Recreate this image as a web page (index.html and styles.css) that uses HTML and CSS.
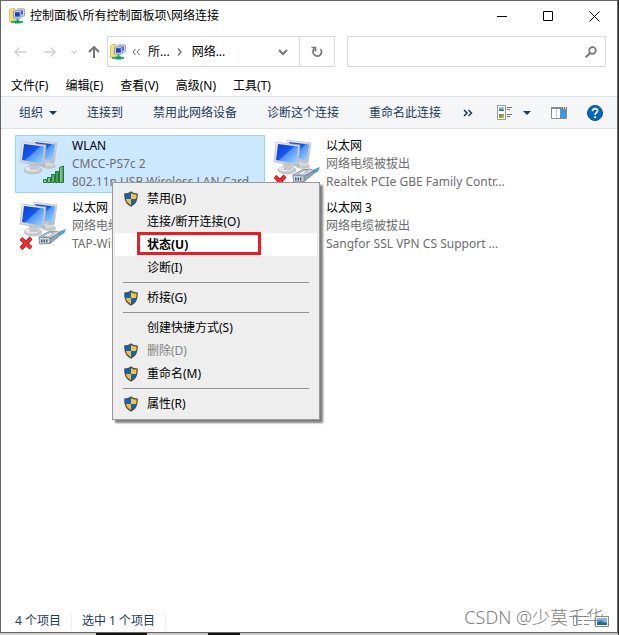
FILE: index.html
```html
<!DOCTYPE html>
<html lang="zh-CN">
<head>
<meta charset="utf-8">
<title>网络连接</title>
<link rel="stylesheet" href="styles.css">
</head>
<body>
<svg class="defs" aria-hidden="true">
  <defs>
    <linearGradient id="screen" x1="0" y1="0" x2="1" y2="1">
      <stop offset="0" stop-color="#0c3fd0"/><stop offset=".45" stop-color="#1458ea"/><stop offset=".5" stop-color="#4f95fa"/><stop offset="1" stop-color="#a9daff"/>
    </linearGradient>
    <linearGradient id="shell" x1="0" y1="0" x2="1" y2="1">
      <stop offset="0" stop-color="#f4f5f6"/><stop offset="1" stop-color="#b4b8bc"/>
    </linearGradient>
    <linearGradient id="bar" x1="0" y1="0" x2="1" y2="0">
      <stop offset="0" stop-color="#a6d9aa"/><stop offset="1" stop-color="#3c9653"/>
    </linearGradient>
    <symbol id="monitors" viewBox="0 0 40 36">
      <ellipse cx="30" cy="27" rx="7" ry="3" fill="#c3c7ca"/>
      <path d="M26 21l6-1 2 7h-7z" fill="#d6d9db"/>
      <path d="M14 1l24 3-3 20-14-2z" fill="url(#shell)" stroke="#b5b9bd" stroke-width=".6"/>
      <path d="M16 3l20 2.500-2.500 16-11-2z" fill="url(#screen)"/>
      <ellipse cx="14" cy="31" rx="9" ry="4" fill="#c4c8cb" stroke="#a6abb0" stroke-width=".5"/>
      <ellipse cx="13" cy="30" rx="7" ry="2.500" fill="#e6e8e9"/>
      <path d="M10 24l8 1 1 6h-8z" fill="#c5c9cc"/>
      <path d="M3 3l24 3-2 21.500L1 23z" fill="url(#shell)" stroke="#b0b4b8" stroke-width=".6"/>
      <path d="M5 5l20 2.500L23.500 25 3 21z" fill="url(#screen)"/>
    </symbol>
    <symbol id="signal" viewBox="0 0 22 18">
      <g fill="url(#bar)" stroke="#26773b" stroke-width="1">
        <path d="M.5 14.500h3v3h-3zM4.500 12.500h3v5h-3zM8.500 9.500h3v8h-3zM12.500 6.500h3v11h-3z"/>
        <path d="M16.500 2.500l4-1.500v16.500h-4z"/>
      </g>
    </symbol>
    <symbol id="cross" viewBox="0 0 14 14">
      <path d="M2 2.500l10 9.500M12 2L2 12.500" stroke="#b50f16" stroke-width="4" fill="none"/>
      <path d="M2 2.500l10 9.500M12 2L2 12.500" stroke="#ee2f34" stroke-width="2.500" fill="none"/>
    </symbol>
    <symbol id="plug" viewBox="0 0 28 16">
      <path d="M17 4.500L25 1.500l2.500-1-1.500 3.500-7 4z" fill="#3fa7d8" stroke="#2c88b5" stroke-width=".5"/>
      <path d="M1 8l9-5 8-1 4 2-1 3.500-9 7L1.500 15z" fill="#cdd8e2" stroke="#6f7b85" stroke-width=".8"/>
      <path d="M12 9l9-5v3.500l-9 7z" fill="#8fa3b8"/>
      <path d="M1 8l11 1L21.500 4M12 9v5.500" fill="none" stroke="#6c7a88" stroke-width=".8"/>
      <path d="M3 10.500h1.500v3H3zM5.500 10.500H7v3H5.500zM8 10.500h1.500v3H8z" fill="#4f5d6b"/>
      <path d="M5 7.500l5 .3 6-4-4-.3z" fill="#f9fbfc" stroke="#7b8999" stroke-width=".6"/>
    </symbol>
    <symbol id="network" viewBox="0 0 16 16">
      <path d="M.5 1.500L3 .5h3v12l-5.500 1z" fill="#f5dc82" stroke="#d4b24a" stroke-width=".7"/>
      <rect x="8" y=".8" width="7.500" height="7.500" rx="1" fill="#d7dbe3" stroke="#8d96a8" stroke-width=".8"/>
      <rect x="10" y="2.500" width="4" height="4" fill="#3a63dd"/>
      <rect x="4.500" y="2.800" width="7.500" height="7.500" rx="1" fill="#d5dae4" stroke="#7b869c" stroke-width=".8"/>
      <rect x="6" y="4.200" width="4.800" height="4.500" fill="#1741c9"/>
      <path d="M7.500 10.500h2v3h-2z" fill="#1aa35f"/>
      <path d="M2 13h12v2H2z" fill="#21b573"/>
      <path d="M6 12.500h5v3H6z" fill="#0f9a58"/>
    </symbol>
    <symbol id="shield" viewBox="0 0 14 16">
      <path d="M7 .3C5 2 3 2.500.2 2.500c0 6 1 10.500 6.800 13.200C12.800 13 13.800 8.500 13.800 2.500 11 2.500 9 2 7 .3z" fill="#454b54"/>
      <path d="M7 2v6H1.900c-.3-1.300-.4-2.800-.4-4.500C3.700 3.500 5.500 3 7 2z" fill="#0b65c7"/>
      <path d="M7 2v6h5.100c.3-1.300.4-2.800.4-4.500C10.300 3.500 8.500 3 7 2z" fill="#ffc230"/>
      <path d="M1.900 8H7v6.200C4 12.500 2.400 10.500 1.900 8z" fill="#ffb92a"/>
      <path d="M12.100 8H7v6.200C10 12.500 11.600 10.500 12.100 8z" fill="#0b65c7"/>
    </symbol>
    <symbol id="caret" viewBox="0 0 8 4"><path d="M0 0h8L4 4z" fill="#1d3a5f"/></symbol>
    <symbol id="details" viewBox="0 0 16 16">
      <path d="M.5.500h8v14h-8z" fill="#fff" stroke="#9a9a9a"/>
      <path d="M2 2h5v4H2z" fill="#8cc4f0"/><path d="M2 4.500l2-.5 3 1v1H2z" fill="#2f7d72"/>
      <path d="M2 9h5v4H2z" fill="#78ad5b"/><path d="M2 9h2v2H2z" fill="#d4543f"/><path d="M5 11h2v2H5z" fill="#e8a33a"/>
      <path d="M10 2.500h5M10 4.500h3M10 9.500h5M10 11.500h3" stroke="#777"/>
    </symbol>
  </defs>
</svg>

<main class="window">
  <header class="titlebar">
    <svg class="icon-16"><use href="#network"/></svg>
    <h1 class="title">控制面板\所有控制面板项\网络连接</h1>
    <button class="caption" aria-label="最小化"><svg viewBox="0 0 11 11"><path d="M0 5.500h10" stroke="#000"/></svg></button>
    <button class="caption" aria-label="最大化"><svg viewBox="0 0 11 11"><path d="M.5.500h9v9h-9z" fill="none" stroke="#000"/></svg></button>
    <button class="caption" aria-label="关闭"><svg viewBox="0 0 11 11"><path d="M.5.500l10 10M10.500.5l-10 10" stroke="#000"/></svg></button>
  </header>

  <div class="navbar">
    <nav class="history" aria-label="导航">
      <button class="nav back" aria-label="返回"><svg viewBox="0 0 12 12"><path d="M12 6H1M5.500 1.500L1 6l4.500 4.500" fill="none" stroke="#d0d0d0" stroke-width="1.500"/></svg></button>
      <button class="nav forward" aria-label="前进"><svg viewBox="0 0 12 12"><path d="M0 6h11M6.500 1.500L11 6l-4.500 4.500" fill="none" stroke="#d0d0d0" stroke-width="1.500"/></svg></button>
      <button class="nav recent" aria-label="最近浏览的位置"><svg viewBox="0 0 12 12"><path d="M3.500 4.500L6 7.500l2.500-3" fill="none" stroke="#d6d6d6" stroke-width="1.500"/></svg></button>
      <button class="nav up" aria-label="上移"><svg viewBox="0 0 12 12"><path d="M6 12V1M1 6l5-5 5 5" fill="none" stroke="#777" stroke-width="2"/></svg></button>
    </nav>
    <div class="address">
      <div class="crumbs">
        <svg class="icon-16"><use href="#network"/></svg>
        <svg class="chevrons" viewBox="0 0 8 8"><path d="M3.500 1L1 4l2.500 3M7.500 1L5 4l2.500 3" fill="none" stroke="#666"/></svg>
        <a class="crumb" href="#">所...</a>
        <svg class="chevrons" viewBox="0 0 8 8"><path d="M2 .5L5 4 2 7.500" fill="none" stroke="#777" stroke-width="1.500"/></svg>
        <a class="crumb" href="#">网络...</a>
        <button class="drop" aria-label="以前的位置"><svg viewBox="0 0 10 8"><path d="M1 2l4 4 4-4" fill="none" stroke="#777" stroke-width="2"/></svg></button>
      </div>
      <button class="refresh" aria-label="刷新"><svg viewBox="0 0 12 12"><path d="M3.500 2.500A4.300 4.300 0 1 0 9.500 3" fill="none" stroke="#777" stroke-width="1.700"/><path d="M.5 1.500h4v4" fill="none" stroke="#777" stroke-width="1.700"/></svg></button>
    </div>
    <label class="search">
      <input type="text" aria-label="搜索">
      <svg viewBox="0 0 12 12"><circle cx="7.500" cy="4.500" r="3.300" fill="none" stroke="#777" stroke-width="1.700"/><path d="M5 7L.7 11.300" stroke="#777" stroke-width="2"/></svg>
    </label>
  </div>

  <nav class="menubar" aria-label="菜单">
    <button>文件(F)</button><button>编辑(E)</button><button>查看(V)</button><button>高级(N)</button><button>工具(T)</button>
  </nav>

  <div class="toolbar">
    <div class="commands">
      <button class="with-caret">组织<svg class="caret"><use href="#caret"/></svg></button>
      <button>连接到</button>
      <button>禁用此网络设备</button>
      <button>诊断这个连接</button>
      <button>重命名此连接</button>
      <button class="more" aria-label="更多"><svg viewBox="0 0 10 8"><path d="M1 1l3 3-3 3M5.500 1l3 3-3 3" fill="none" stroke="#1d3a5f" stroke-width="1.500"/></svg></button>
    </div>
    <div class="tools">
      <button class="with-caret view" aria-label="更改视图"><svg class="icon-16"><use href="#details"/></svg><svg class="caret"><use href="#caret"/></svg></button>
      <button aria-label="预览窗格"><svg class="icon-16" viewBox="0 0 16 16"><path d="M.5 2.500h15v11H.5z" fill="#fff" stroke="#8a8a8a"/><path d="M0 2h16v2H0z" fill="#8a8a8a"/><path d="M5.500 4v9" stroke="#c8c8c8"/><path d="M9 4h6v9H9z" fill="#3f97dd"/><path d="M12 2.500h1v1h-1zM14 2.500h1v1h-1z" fill="#fff"/></svg></button>
      <button aria-label="帮助"><svg class="icon-16" viewBox="0 0 16 16"><circle cx="8" cy="8" r="7.500" fill="#0067c6" stroke="#174f88"/><path d="M5.500 6.200C5.500 2.800 10.600 2.900 10.600 5.800 10.600 7.700 8.100 7.700 8.100 10" fill="none" stroke="#fff" stroke-width="1.700"/><circle cx="8.100" cy="12.200" r="1.100" fill="#fff"/></svg></button>
    </div>
  </div>

  <section class="connections" aria-label="网络连接">
    <button class="connection selected">
      <span class="picture"><svg class="monitors"><use href="#monitors"/></svg><svg class="signal"><use href="#signal"/></svg></span>
      <span class="info"><span class="name">WLAN</span><span>CMCC-PS7c 2</span><span>802.11n USB Wireless LAN Card</span></span>
    </button>
    <button class="connection">
      <span class="picture"><svg class="monitors"><use href="#monitors"/></svg><svg class="cross"><use href="#cross"/></svg><svg class="plug"><use href="#plug"/></svg></span>
      <span class="info"><span class="name">以太网</span><span>网络电缆被拔出</span><span>Realtek PCIe GBE Family Contr...</span></span>
    </button>
    <button class="connection">
      <span class="picture"><svg class="monitors"><use href="#monitors"/></svg><svg class="cross"><use href="#cross"/></svg><svg class="plug"><use href="#plug"/></svg></span>
      <span class="info"><span class="name">以太网</span><span>网络电缆被拔出</span><span>TAP-Windows</span></span>
    </button>
    <button class="connection">
      <span class="picture"><svg class="monitors"><use href="#monitors"/></svg><svg class="cross"><use href="#cross"/></svg><svg class="plug"><use href="#plug"/></svg></span>
      <span class="info"><span class="name">以太网 3</span><span>网络电缆被拔出</span><span>Sangfor SSL VPN CS Support ...</span></span>
    </button>
  </section>

  <footer class="status">
    <span>4 个项目</span><span>选中 1 个项目</span>
    <div class="layouts">
      <svg viewBox="0 0 18 14"><path d="M.5 1.500h3v10h-3z" fill="#fff" stroke="#999"/><path d="M5 2.500h4M11 2.500h5M5 6.500h4M11 6.500h5M5 10.500h4M11 10.500h5" stroke="#888"/></svg>
      <svg viewBox="0 0 14 11" class="large"><path d="M.5.500h13v10H.5z" fill="#fff" stroke="#888"/><path d="M2 2h10v7H2z" fill="#78b9ef"/><path d="M2 6l3-1 7 2v2H2z" fill="#206b8f"/></svg>
    </div>
  </footer>

  <div class="context" role="menu">
    <button role="menuitem"><svg><use href="#shield"/></svg><span>禁用(B)</span></button>
    <button role="menuitem"><span>连接/断开连接(O)</span></button>
    <button role="menuitem" class="active"><span>状态(U)</span></button>
    <button role="menuitem"><span>诊断(I)</span></button>
    <hr>
    <button role="menuitem"><svg><use href="#shield"/></svg><span>桥接(G)</span></button>
    <hr>
    <button role="menuitem"><span>创建快捷方式(S)</span></button>
    <button role="menuitem" disabled><svg><use href="#shield"/></svg><span>删除(D)</span></button>
    <button role="menuitem"><svg><use href="#shield"/></svg><span>重命名(M)</span></button>
    <hr>
    <button role="menuitem"><svg><use href="#shield"/></svg><span>属性(R)</span></button>
  </div>
  <div class="watermark">CSDN @少莫千华</div>
</main>
</body>
</html>
```
FILE: styles.css
```css
*, *::after { box-sizing: border-box; }
body {
  margin: 0;
  min-height: 100vh;
  display: flex;
  padding: 0 1px 2px 0;
  background: linear-gradient(90deg, #d0d0d0 0 96px, #111 96px 147px, #c8c8c8 147px 208px, #111 208px 240px, #c8c8c8 240px calc(100% - 1px), #2e2e2e calc(100% - 1px));
  font: 12px/18px "Noto Sans", "Noto Sans CJK SC", sans-serif;
  color: #000;
}
button, input { font: inherit; color: inherit; }
button {
  display: flex;
  align-items: center;
  margin: 0;
  padding: 0;
  border: 0;
  background: none;
  white-space: nowrap;
}
svg { display: block; flex: none; }
.defs { position: absolute; width: 0; height: 0; }
.icon-16 { width: 16px; height: 16px; }

.window {
  position: relative;
  flex: 1;
  display: flex;
  flex-direction: column;
  min-width: 0;
  border: 1px solid #666;
  background: #fff;
}

.titlebar { display: flex; align-items: center; height: 30px; padding-left: 8px; }
.title { flex: 1; margin: 0 0 0 5px; font-size: 12px; font-weight: 400; }
.caption { justify-content: center; width: 46px; height: 28px; }
.caption svg { width: 11px; height: 11px; }

.navbar {
  display: grid;
  grid-template-columns: 106px 240fr 259fr;
  align-items: center;
  height: 41px;
  padding-right: 11px;
}
.history { display: flex; padding-left: 4px; }
.nav { justify-content: center; width: 30px; height: 31px; }
.nav svg { width: 12px; height: 12px; }
.recent { width: 17px; }
.up { width: 24px; }
.address, .search { display: flex; min-width: 0; height: 31px; border: 1px solid #d9d9d9; }
.address { margin-right: 12px; }
.crumbs { flex: 1; display: flex; align-items: center; padding-left: 2px; }
.chevrons { width: 8px; height: 8px; margin: 0 8px 0 6px; }
.crumb { color: inherit; text-decoration: none; white-space: nowrap; }
.drop { justify-content: center; width: 32px; height: 29px; margin-left: auto; }
.drop svg { width: 10px; height: 8px; }
.refresh { justify-content: center; width: 35px; border-left: 1px solid #d9d9d9; }
.refresh svg { width: 12px; height: 12px; }
.search { align-items: center; padding-right: 8px; }
.search input { flex: 1; min-width: 0; height: 29px; border: 0; padding: 0 8px; outline: 0; }
.search svg { width: 12px; height: 12px; }

.menubar { display: flex; gap: 17px; height: 24px; padding: 4px 0 0 10px; }

.toolbar {
  display: flex;
  align-items: center;
  justify-content: space-between;
  height: 33px;
  padding: 0 14px 0 18px;
  border: solid #dfe1e3;
  border-width: 1px 0;
  background: #f5f6f8;
  color: #1e395b;
}
.commands { display: flex; gap: 30px; }
.with-caret { gap: 6px; }
.caret { width: 8px; height: 4px; }
.more { margin-left: -8px; }
.more svg { width: 10px; height: 8px; }
.tools { display: flex; gap: 20px; }
.view { gap: 10px; }

.connections {
  flex: 1;
  display: grid;
  grid-template-columns: repeat(auto-fill, 250px);
  grid-auto-rows: 58px;
  gap: 4px;
  align-content: start;
  padding: 6px 14px;
}
.connection {
  align-items: flex-start;
  gap: 5px;
  padding: 1px 3px 0;
  border: 1px solid transparent;
  text-align: left;
  color: #6d6d6d;
}
.selected { background: #cce8ff; border-color: #99d1ff; }
.picture { position: relative; flex: none; width: 48px; height: 54px; }
.info { display: flex; flex-direction: column; }
.name { color: #000; }
.monitors { width: 40px; height: 36px; margin-top: 2px; }
.signal { position: absolute; right: 2px; bottom: 8px; width: 22px; height: 18px; }
.cross { position: absolute; left: 0; bottom: 3px; width: 14px; height: 14px; }
.plug { position: absolute; right: 1px; bottom: 8px; width: 28px; height: 16px; }

.status {
  display: flex;
  align-items: center;
  height: 24px;
  padding: 2px 8px 0 14px;
  color: #1e395b;
}
.status span { padding-right: 10px; margin-right: 10px; border-right: 1px solid #eee; }
.layouts { display: flex; align-items: center; gap: 4px; margin-left: auto; }
.layouts svg { width: 18px; height: 14px; }
.layouts .large { width: 14px; height: 11px; }

.context {
  position: absolute;
  left: 111px;
  top: 181px;
  width: 208px;
  padding: 4px 2px;
  border: 1px solid #999;
  background: #eee;
  box-shadow: 3px 3px 2px rgba(0, 0, 0, .5);
}
.context button { position: relative; width: 100%; height: 23px; padding-left: 9px; }
.context span { margin-left: 9px; }
.context span:first-child { margin-left: 23px; }
.context svg { width: 14px; height: 16px; }
.context button:disabled { color: #838383; }
.context hr { height: 1px; margin: 3px 8px; border: 0; background: #919191; }
.context .active { background: #fff; font-weight: 700; }
.active::after {
  content: "";
  position: absolute;
  left: 22px;
  top: -1px;
  width: 124px;
  height: 23px;
  border: 3px solid #ed1c24;
}
.watermark {
  position: absolute;
  right: 13px;
  bottom: 3px;
  font: 300 18px/24px "Noto Sans", "Noto Sans CJK SC", sans-serif;
  color: #808080;
  pointer-events: none;
}
```
